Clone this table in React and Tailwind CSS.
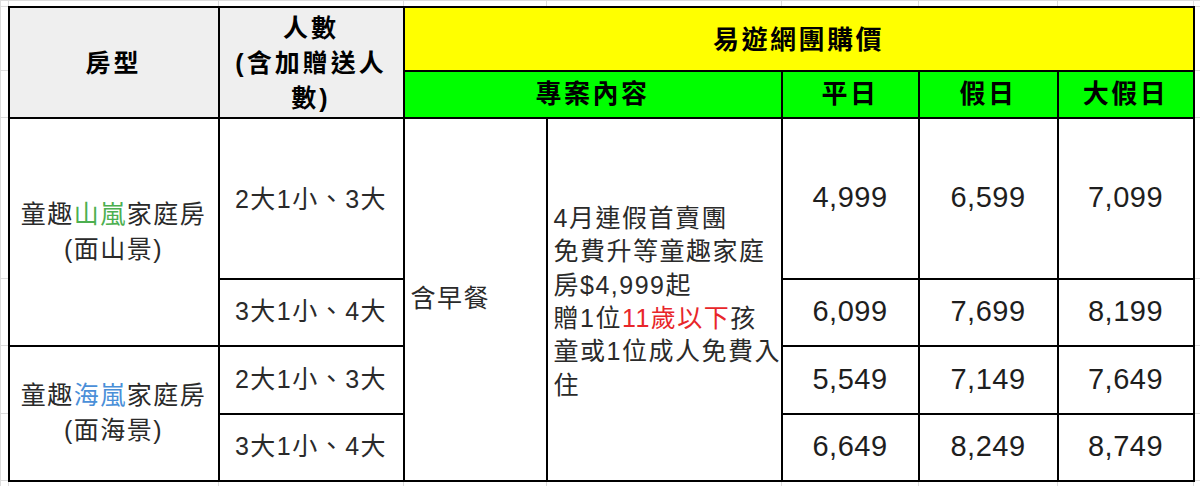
import React from 'react';

const FONT = { fontFamily: '"Liberation Sans", "Noto Sans CJK TC", sans-serif' };

// faint spreadsheet gridlines around the priced block
const grid = 'border border-[#dcdcdc] p-0';
const cell = 'border-2 border-black p-0';

const PRICES = [
    ['4,999', '6,599', '7,099'],
    ['6,099', '7,699', '8,199'],
    ['5,549', '7,149', '7,649'],
    ['6,649', '8,249', '8,749'],
];

function Spacers({count}) {
    return Array.from({length: count}).map((_, i) => <td key={i} className={grid}/>);
}

function Price({value}) {
    return (
        <td className={`${cell} text-center align-middle text-[29px] tracking-[0.5px] text-[#1e1e1e]`}>
            {value}
        </td>
    );
}

export default function App() {
    return (
        <div className="w-[1200px] h-[486px] bg-white overflow-hidden" style={FONT}>
            <table className="w-[1200px] h-[486px] table-fixed border-collapse">
                <colgroup>
                    <col className="w-[8px]"/>
                    <col className="w-[210px]"/>
                    <col className="w-[185px]"/>
                    <col className="w-[143px]"/>
                    <col className="w-[235px]"/>
                    <col className="w-[137px]"/>
                    <col className="w-[139px]"/>
                    <col className="w-[136px]"/>
                    <col className="w-[7px]"/>
                </colgroup>
                <tbody>
                    <tr className="h-[6px]">
                        <Spacers count={9}/>
                    </tr>

                    {/* header: yellow title row */}
                    <tr className="h-[64px]">
                        <td className={grid}/>
                        <td rowSpan={2}
                            className={`${cell} bg-[#efefef] text-center align-middle font-bold text-[25px] tracking-[3px] text-black pt-[4px]`}>
                            房型
                        </td>
                        <td rowSpan={2}
                            className={`${cell} bg-[#efefef] text-center align-middle font-bold text-[25px] leading-[35px] tracking-[3px] text-black pt-[2px]`}>
                            人數<br/>(含加贈送人<br/>數)
                        </td>
                        <td colSpan={5}
                            className={`${cell} bg-[#ffff00] text-center align-middle font-bold text-[26px] tracking-[2.5px] text-black pt-[4px]`}>
                            易遊網團購價
                        </td>
                        <td className={grid}/>
                    </tr>

                    {/* header: green column labels */}
                    <tr className="h-[47px]">
                        <td className={grid}/>
                        <td colSpan={2}
                            className={`${cell} bg-[#00ff00] text-center align-middle font-bold text-[26px] tracking-[2.5px] text-black`}>
                            專案內容
                        </td>
                        <td className={`${cell} bg-[#00ff00] text-center align-middle font-bold text-[26px] tracking-[2.5px] text-black`}>平日</td>
                        <td className={`${cell} bg-[#00ff00] text-center align-middle font-bold text-[26px] tracking-[2.5px] text-black`}>假日</td>
                        <td className={`${cell} bg-[#00ff00] text-center align-middle font-bold text-[26px] tracking-[2.5px] text-black`}>大假日</td>
                        <td className={grid}/>
                    </tr>

                    <tr className="h-[161px]">
                        <td className={grid}/>
                        <td rowSpan={2}
                            className={`${cell} text-center align-middle text-[25px] leading-[35px] tracking-[1.5px] text-[#2a2a2a]`}>
                            童趣<span className="text-[#4caf50]">山嵐</span>家庭房<br/>(面山景)
                        </td>
                        <td className={`${cell} text-center align-middle text-[25px] tracking-[1.5px] text-[#2a2a2a] pt-[4px]`}>2大1小、3大</td>
                        <td rowSpan={4}
                            className={`${cell} align-middle text-left pl-[6px] text-[25px] tracking-[1.5px] text-[#2a2a2a]`}>
                            含早餐
                        </td>
                        <td rowSpan={4}
                            className={`${cell} align-middle text-left pl-[6px] pt-[6px] text-[25px] leading-[33.4px] tracking-[1.5px] text-[#2a2a2a] whitespace-nowrap`}>
                            4月連假首賣團<br/>
                            免費升等童趣家庭<br/>
                            房$4,999起<br/>
                            贈1位<span className="text-[#e8262a]">11歲以下</span>孩<br/>
                            童或1位成人免費入<br/>
                            住
                        </td>
                        {PRICES[0].map((p) => <Price key={p} value={p}/>)}
                        <td className={grid}/>
                    </tr>

                    <tr className="h-[67px]">
                        <td className={grid}/>
                        <td className={`${cell} text-center align-middle text-[25px] tracking-[1.5px] text-[#2a2a2a]`}>3大1小、4大</td>
                        {PRICES[1].map((p) => <Price key={p} value={p}/>)}
                        <td className={grid}/>
                    </tr>

                    <tr className="h-[68px]">
                        <td className={grid}/>
                        <td rowSpan={2}
                            className={`${cell} text-center align-middle text-[25px] leading-[35px] tracking-[1.5px] text-[#2a2a2a]`}>
                            童趣<span className="text-[#4a8fd8]">海嵐</span>家庭房<br/>(面海景)
                        </td>
                        <td className={`${cell} text-center align-middle text-[25px] tracking-[1.5px] text-[#2a2a2a]`}>2大1小、3大</td>
                        {PRICES[2].map((p) => <Price key={p} value={p}/>)}
                        <td className={grid}/>
                    </tr>

                    <tr className="h-[67px]">
                        <td className={grid}/>
                        <td className={`${cell} text-center align-middle text-[25px] tracking-[1.5px] text-[#2a2a2a]`}>3大1小、4大</td>
                        {PRICES[3].map((p) => <Price key={p} value={p}/>)}
                        <td className={grid}/>
                    </tr>

                    <tr className="h-[6px]">
                        <Spacers count={9}/>
                    </tr>
                </tbody>
            </table>
        </div>
    );
}
